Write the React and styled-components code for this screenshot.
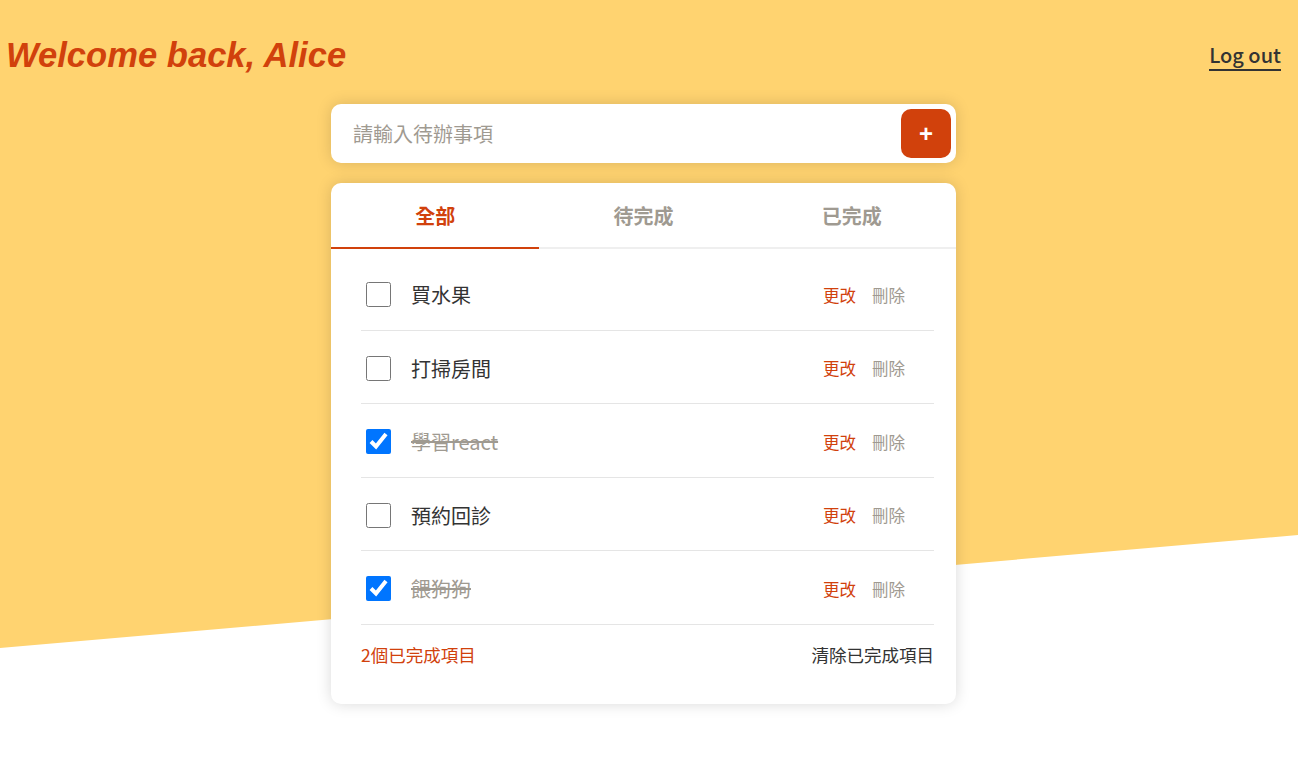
import React, { useState } from 'react';
import styled, { createGlobalStyle } from 'styled-components';

const GlobalStyle = createGlobalStyle`
  * {
    box-sizing: border-box;
  }

  body {
    margin: 0;
    font-family: 'Noto Sans CJK TC', 'Noto Sans', sans-serif;
    color: #333;
    background: #fff;
  }
`;

const Page = styled.div`
  position: relative;
  min-height: 100vh;

  &::before {
    content: '';
    position: absolute;
    inset: 0;
    background: #ffd370;
    clip-path: polygon(0 0, 100% 0, 100% 535px, 0 648px);
    z-index: 0;
  }
`;

const Content = styled.div`
  position: relative;
  z-index: 1;
`;

const Header = styled.header`
  display: flex;
  align-items: center;
  justify-content: space-between;
  padding: 35px 17px 0 6px;
  height: 75px;
`;

const Title = styled.h1`
  margin: 0;
  font-family: 'Liberation Sans', Arial, sans-serif;
  font-style: italic;
  font-weight: 700;
  font-size: 34.6px;
  line-height: 40px;
  color: #d1410c;
`;

const LogoutLink = styled.a`
  font-family: 'Noto Sans CJK TC', 'Noto Sans', sans-serif;
  font-size: 20px;
  font-weight: 500;
  line-height: 26px;
  padding-bottom: 1px;
  margin-top: 3px;
  color: #333;
  text-decoration: none;
  border-bottom: 2px solid #333;
  cursor: pointer;
`;

const Main = styled.main`
  width: 625px;
  margin: 29px 0 0 calc(50% - 318px);
`;

const InputBox = styled.form`
  display: flex;
  align-items: center;
  height: 59px;
  background: #fff;
  border-radius: 10px;
  box-shadow: 0 0 15px rgba(0, 0, 0, 0.15);
  padding: 5px 5px 5px 20px;
`;

const TodoInput = styled.input`
  flex: 1;
  border: none;
  outline: none;
  font-family: inherit;
  font-size: 20px;
  color: #333;
  background: transparent;

  &::placeholder {
    color: #9f9a91;
  }
`;

const AddButton = styled.button`
  width: 50px;
  height: 49px;
  border: none;
  border-radius: 10px;
  background: #d1410c;
  color: #fff;
  font-size: 24px;
  font-weight: 700;
  line-height: 1;
  font-family: 'Liberation Sans', Arial, sans-serif;
  cursor: pointer;
`;

const Card = styled.section`
  margin-top: 20px;
  background: #fff;
  border-radius: 10px;
  box-shadow: 0 0 15px rgba(0, 0, 0, 0.15);
  overflow: hidden;
`;

const Tabs = styled.div`
  display: grid;
  grid-template-columns: repeat(3, 1fr);
`;

const Tab = styled.button`
  height: 66px;
  border: none;
  background: none;
  font-family: inherit;
  font-size: 20px;
  font-weight: 700;
  color: ${({ $active }) => ($active ? '#d1410c' : '#9f9a91')};
  border-bottom: 2px solid ${({ $active }) => ($active ? '#d1410c' : '#efefef')};
  cursor: pointer;
`;

const List = styled.ul`
  list-style: none;
  margin: 0;
  padding: 8px 22px 0 30px;
`;

const Row = styled.li`
  display: flex;
  align-items: center;
  height: 73.5px;
  border-bottom: 1px solid #e5e5e5;
  padding: 3px 29px 0 5px;
`;

const Check = styled.input`
  width: 25px;
  height: 25px;
  margin: 0 20px 0 0;
  flex-shrink: 0;
`;

const ItemText = styled.span`
  flex: 1;
  font-size: 20px;
  color: ${({ $done }) => ($done ? '#9f9a91' : '#333')};
  text-decoration: ${({ $done }) => ($done ? 'line-through' : 'none')};
`;

const Actions = styled.div`
  display: flex;
  gap: 16px;
`;

const ActionLink = styled.a`
  font-size: 16.5px;
  color: ${({ $muted }) => ($muted ? '#9f9a91' : '#d1410c')};
  cursor: pointer;
`;

const Footer = styled.div`
  display: flex;
  justify-content: space-between;
  align-items: center;
  padding: 17px 22px 37px 30px;
  font-size: 17.5px;
`;

const Count = styled.span`
  color: #d1410c;
`;

const ClearLink = styled.a`
  color: #333;
  cursor: pointer;
`;

const initialTodos = [
  { id: 1, text: '買水果', done: false },
  { id: 2, text: '打掃房間', done: false },
  { id: 3, text: '學習react', done: true },
  { id: 4, text: '預約回診', done: false },
  { id: 5, text: '餵狗狗', done: true },
];

const tabs = ['全部', '待完成', '已完成'];

const App = () => {
  const [todos, setTodos] = useState(initialTodos);
  const [activeTab, setActiveTab] = useState(0);

  const toggle = (id) => {
    setTodos(prev => prev.map(t => (t.id === id ? { ...t, done: !t.done } : t)));
  };

  const doneCount = todos.filter(t => t.done).length;

  return (
    <Page>
      <GlobalStyle />
      <Content>
        <Header>
          <Title>Welcome back, Alice</Title>
          <LogoutLink>Log out</LogoutLink>
        </Header>

        <Main>
          <InputBox onSubmit={e => e.preventDefault()}>
            <TodoInput placeholder="請輸入待辦事項" />
            <AddButton type="submit">+</AddButton>
          </InputBox>

          <Card>
            <Tabs>
              {tabs.map((tab, i) => (
                <Tab key={tab} $active={activeTab === i} onClick={() => setActiveTab(i)}>
                  {tab}
                </Tab>
              ))}
            </Tabs>

            <List>
              {todos.map(todo => (
                <Row key={todo.id}>
                  <Check type="checkbox" checked={todo.done} onChange={() => toggle(todo.id)} />
                  <ItemText $done={todo.done}>{todo.text}</ItemText>
                  <Actions>
                    <ActionLink>更改</ActionLink>
                    <ActionLink $muted>刪除</ActionLink>
                  </Actions>
                </Row>
              ))}
            </List>

            <Footer>
              <Count>{doneCount}個已完成項目</Count>
              <ClearLink>清除已完成項目</ClearLink>
            </Footer>
          </Card>
        </Main>
      </Content>
    </Page>
  );
};

export default App;
